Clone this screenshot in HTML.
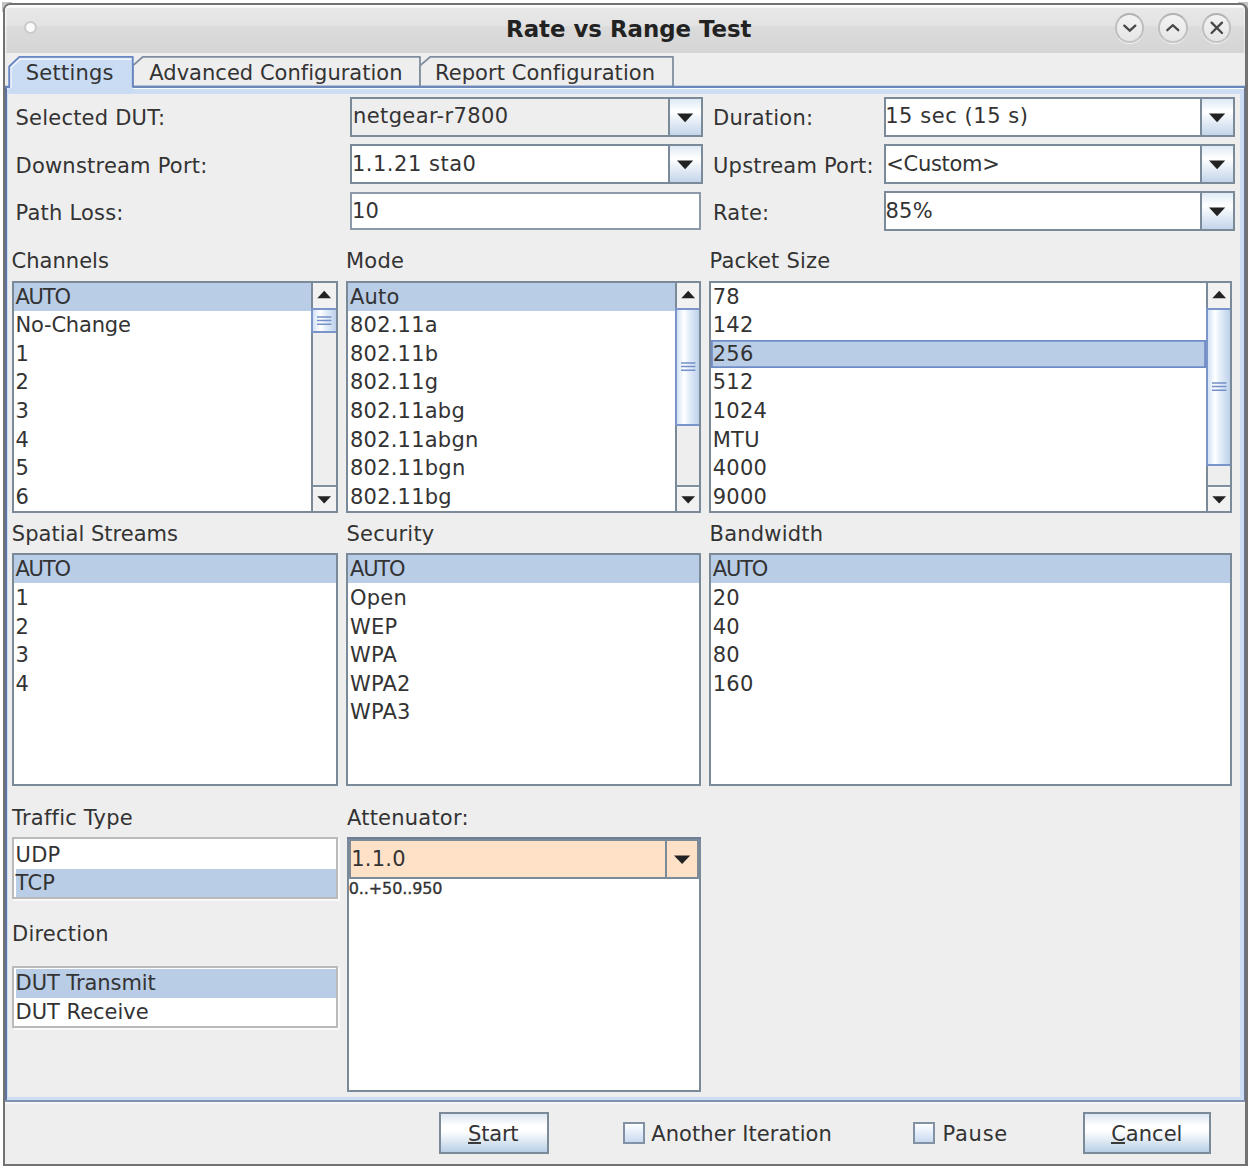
<!DOCTYPE html><html><head><meta charset="utf-8"><title>Rate vs Range Test</title><style>
html,body{margin:0;padding:0;}
body{width:1250px;height:1166px;overflow:hidden;background:#fff;position:relative;font-family:"DejaVu Sans","Liberation Sans",sans-serif;font-size:21px;letter-spacing:0.22px;color:#333;}
.abs{position:absolute;}
.win{position:absolute;left:3px;top:3px;width:1245px;height:1163px;box-sizing:border-box;border:2px solid #727272;border-right-width:3.5px;border-radius:7.5px 7.5px 0 0;background:#eeeeee;overflow:hidden;}
.corner{position:absolute;width:10px;height:10px;background:#c4c4c4;}
.title{position:absolute;left:0;top:0;width:1239.5px;height:47.5px;box-shadow:inset 1.6px 0 0 rgba(255,255,255,0.55), inset -1.2px 0 0 rgba(255,255,255,0.4);background:linear-gradient(#ffffff 0px,#fafafa 2.2px,#e8e8e8 3.5px,#e3e3e3 20.5px,#dbdbdb 22px,#d5d5d5 47.5px);}
.title .t{position:absolute;left:501.1px;top:8.5px;white-space:pre;font-weight:bold;font-size:22.85px;letter-spacing:0;line-height:30px;color:#222;}
.wb{position:absolute;width:29.6px;height:29.6px;border-radius:50%;border:2px solid #bfbfbf;border-top-color:#b2b2b2;border-bottom-color:#c6c6c6;box-sizing:border-box;background:linear-gradient(#f3f3f3,#e6e6e6);box-shadow:0 1px 0.5px rgba(255,255,255,0.7);}
.lbl{position:absolute;white-space:pre;line-height:28px;height:28px;}
.combo{position:absolute;box-sizing:border-box;border:2px solid #7a8a99;background:#fff;}
.combo .tx{position:absolute;left:0px;top:0;white-space:pre;line-height:28px;}
.combo .btn{position:absolute;right:0;top:0;bottom:0;width:30.2px;border-left:2px solid #7a8a99;background:linear-gradient(#dfeaf5 0%,#ffffff 35%,#c3d5ea 100%);}
.combo .btn svg{position:absolute;left:0;top:0;}
.list{position:absolute;box-sizing:border-box;border:2px solid #7a8a99;background:#fff;overflow:hidden;}
.row{position:absolute;left:0;right:0;white-space:pre;}
.row span{position:absolute;left:0;top:0;}
.row.sel{background:#bacde6;}
.sb{position:absolute;top:0;bottom:0;right:0;width:22.7px;border-left:2px solid #7a8a99;background:#eeeeee;}
.sbb{position:absolute;left:0;right:0;background:#f1f1f1;box-sizing:border-box;}
.thumb{position:absolute;left:-2px;right:0;box-sizing:border-box;border:2px solid #7b95cb;border-right:none;background:linear-gradient(90deg,#d3e2f5 0%,#ffffff 32%,#e4eefa 55%,#bdd1ea 100%);}
.btnb{position:absolute;box-sizing:border-box;border:2px solid #7a8a99;background:linear-gradient(#dbe6f2 0%,#ffffff 30%,#ffffff 45%,#b8cfe5 100%);}
.chk{position:absolute;box-sizing:border-box;width:21.6px;height:21.6px;border:2px solid #8391a4;background:linear-gradient(#fdfeff 0%,#e9f0fb 40%,#c9d9ef 100%);}
u{text-decoration:underline;text-underline-offset:1.6px;text-decoration-thickness:1.9px;}
</style></head><body>
<div class="corner" style="left:2.3px;top:2.3px"></div><div class="corner" style="left:1238px;top:2.3px"></div>
<div class="win">
<div class="title"><div class="t">Rate vs Range Test</div>
<div class="abs" style="left:19px;top:15.5px;width:13.4px;height:13.4px;border-radius:50%;background:#fbfbfb;border:2px solid #cbcbcb;box-sizing:border-box"></div>
<div class="wb" style="left:1109.8px;top:8.1px"><svg width="29.6" height="29.6" viewBox="0 0 29.6 29.6" style="position:absolute;left:-2px;top:-2px"><path d="M9.3 12.6 L14.8 17.6 L20.3 12.6" fill="none" stroke="#484848" stroke-width="2.3" stroke-linecap="round"/></svg></div>
<div class="wb" style="left:1153.2px;top:8.1px"><svg width="29.6" height="29.6" viewBox="0 0 29.6 29.6" style="position:absolute;left:-2px;top:-2px"><path d="M9.3 17.2 L14.8 12.2 L20.3 17.2" fill="none" stroke="#484848" stroke-width="2.3" stroke-linecap="round"/></svg></div>
<div class="wb" style="left:1196.7px;top:8.1px"><svg width="29.6" height="29.6" viewBox="0 0 29.6 29.6" style="position:absolute;left:-2px;top:-2px"><path d="M9.6 9.6 L20 20 M20 9.6 L9.6 20" fill="none" stroke="#484848" stroke-width="2.3" stroke-linecap="round"/></svg></div>
</div>
<div class="abs" style="left:0px;top:80.8px;width:1241px;height:1016.2px;background:#cddef4"></div>
<div class="abs" style="left:0px;top:80.8px;width:1241px;height:1.8px;background:#6a86be"></div>
<div class="abs" style="left:1.8px;top:82.6px;width:1237.4px;height:1.9px;background:#f5faff"></div>
<div class="abs" style="left:0px;top:80.8px;width:1.8px;height:1016.2px;background:#5f73a0"></div>
<div class="abs" style="left:1239.2px;top:80.8px;width:1.8px;height:1016.2px;background:#68789c"></div>
<div class="abs" style="left:0px;top:1095.2px;width:1241px;height:1.8px;background:#8391b0"></div>
<div class="abs" style="left:3.4px;top:88.5px;width:1231.8px;height:1003.1px;background:#eeeeee"></div>
<div class="abs" style="left:0px;top:1097px;width:1241px;height:1.5px;background:#f6f6f6"></div>
<svg class="abs" style="left:0;top:45px" width="1241" height="45" viewBox="5 50 1241 45">
<polygon points="132.8,86.7 132.8,65.6 143,56.8 420,56.8 420,86.7" fill="#eeeeee" stroke="#7f8e9e" stroke-width="1.8" stroke-linejoin="round"/>
<polygon points="420,86.7 420,65.6 430.4,56.8 673,56.8 673,86.7" fill="#eeeeee" stroke="#7f8e9e" stroke-width="1.8" stroke-linejoin="round"/>
<polygon points="8.5,93.5 8.5,66.5 19,56.8 132.8,56.8 132.8,88.3 132.8,93.5" fill="#c9dcf3"/>
<polyline points="11,88 11,67.4 20,59.2 131.4,59.2" fill="none" stroke="#ffffff" stroke-width="1.4" opacity="0.75"/>
<polyline points="9.2,88 9.2,66.5 19.3,56.9 132.8,56.9 132.8,86.7" fill="none" stroke="#6a86c2" stroke-width="1.8" stroke-linejoin="round"/>
<line x1="131.9" y1="86.7" x2="1246" y2="86.7" stroke="#6a86be" stroke-width="1.8"/>
<line x1="5" y1="86.7" x2="9.2" y2="86.7" stroke="#6a86be" stroke-width="1.8"/>
</svg>
<div class="lbl" style="left:20.8px;top:54.2px;">Settings</div>
<div class="lbl" style="left:144.3px;top:54.2px;letter-spacing:0.02px;">Advanced Configuration</div>
<div class="lbl" style="left:430px;top:54.2px;letter-spacing:0.07px;">Report Configuration</div>
<div class="lbl" style="left:10.5px;top:99.2px;">Selected DUT:</div>
<div class="lbl" style="left:708px;top:99.2px;">Duration:</div>
<div class="combo" style="left:345px;top:91.8px;width:352.6px;height:40.3px;background:#eeeeee;border:2px solid #7a8a99">
<div class="tx" style="left:1px;top:3.4px;letter-spacing:0.39px">netgear-r7800</div>
<div class="btn"><svg width="31" height="36" viewBox="0 0 31 36"><polygon points="7,14.55 23.2,14.55 15.1,23.15" fill="#222"/></svg></div>
</div>
<div class="combo" style="left:878.6px;top:91.8px;width:351px;height:40.3px;background:#fff;border:2px solid #7a8a99">
<div class="tx" style="left:-0.4px;top:3.4px;letter-spacing:0.55px">15 sec (15 s)</div>
<div class="btn"><svg width="31" height="36" viewBox="0 0 31 36"><polygon points="7,14.55 23.2,14.55 15.1,23.15" fill="#222"/></svg></div>
</div>
<div class="lbl" style="left:10.5px;top:147.2px;">Downstream Port:</div>
<div class="lbl" style="left:708px;top:147.2px;">Upstream Port:</div>
<div class="combo" style="left:345px;top:139px;width:352.6px;height:40.3px;background:#fff;border:2px solid #7a8a99">
<div class="tx" style="left:-0.1px;top:4.2px;letter-spacing:0.52px">1.1.21 sta0</div>
<div class="btn"><svg width="31" height="36" viewBox="0 0 31 36"><polygon points="7,14.55 23.2,14.55 15.1,23.15" fill="#222"/></svg></div>
</div>
<div class="combo" style="left:878.6px;top:139px;width:351px;height:40.3px;background:#fff;border:2px solid #7a8a99">
<div class="tx" style="left:0.6px;top:4.2px;letter-spacing:-0.28px">&lt;Custom&gt;</div>
<div class="btn"><svg width="31" height="36" viewBox="0 0 31 36"><polygon points="7,14.55 23.2,14.55 15.1,23.15" fill="#222"/></svg></div>
</div>
<div class="lbl" style="left:10.5px;top:194.2px;">Path Loss:</div>
<div class="lbl" style="left:708px;top:194.2px;">Rate:</div>
<div class="combo" style="left:345px;top:186.5px;width:350.9px;height:38.6px;background:#fff;border:2px solid #8c99ab">
<div class="tx" style="left:-0.1px;top:3.7px;letter-spacing:0.22px">10</div>
</div>
<div class="combo" style="left:878.6px;top:186.2px;width:351px;height:40.3px;background:#fff;border:2px solid #7a8a99">
<div class="tx" style="left:-0.1px;top:4px;letter-spacing:0.22px">85%</div>
<div class="btn"><svg width="31" height="36" viewBox="0 0 31 36"><polygon points="7,14.55 23.2,14.55 15.1,23.15" fill="#222"/></svg></div>
</div>
<div class="lbl" style="left:6.6px;top:242.2px;letter-spacing:0.02px;">Channels</div>
<div class="lbl" style="left:341px;top:242.2px;">Mode</div>
<div class="lbl" style="left:704.5px;top:242.2px;">Packet Size</div>
<div class="list" style="left:6.8px;top:275.7px;width:326.2px;height:232.3px;border-color:#7a8a99">
<div class="row sel" style="top:0px;height:28.3px;line-height:28px;right:24.7px;left:0px;"><span style="letter-spacing:-1.18px;left:1.6px;top:0.5px">AUTO</span></div>
<div class="row" style="top:28.3px;height:28.57px;line-height:28px;right:24.7px;left:0px;"><span style="letter-spacing:-0.18px;left:1.6px;top:0.2px">No-Change</span></div>
<div class="row" style="top:56.87px;height:28.57px;line-height:28px;right:24.7px;left:0px;"><span style="left:1.6px;top:0.63px">1</span></div>
<div class="row" style="top:85.44px;height:28.57px;line-height:28px;right:24.7px;left:0px;"><span style="left:1.6px;top:0.06px">2</span></div>
<div class="row" style="top:114.01px;height:28.57px;line-height:28px;right:24.7px;left:0px;"><span style="left:1.6px;top:0.49px">3</span></div>
<div class="row" style="top:142.58px;height:28.57px;line-height:28px;right:24.7px;left:0px;"><span style="left:1.6px;top:0.92px">4</span></div>
<div class="row" style="top:171.15px;height:28.57px;line-height:28px;right:24.7px;left:0px;"><span style="left:1.6px;top:0.35px">5</span></div>
<div class="row" style="top:199.72px;height:28.57px;line-height:28px;right:24.7px;left:0px;"><span style="left:1.6px;top:0.78px">6</span></div>
<div class="sb">
<div class="sbb" style="top:0;height:25px"><svg width="23" height="25" style="position:absolute;left:0;top:0"><polygon points="4.3,15.2 11.2,7.8 18.1,15.2" fill="#222"/></svg></div>
<div class="sbb" style="top:202.3px;height:26px;border-top:2px solid #808f9e;box-shadow:inset 0 1.5px 0 #fafafa"><svg width="23" height="25" style="position:absolute;left:0;top:-2px"><polygon points="4.3,11.2 18.1,11.2 11.2,18.6" fill="#222"/></svg></div>
<div class="thumb" style="top:25px;height:25.8px"></div>
<svg class="abs" style="left:4.2px;top:32.3px" width="15" height="12"><path d="M0 2H14.4M0 5.6H14.4M0 9.2H14.4" stroke="#7590c8" stroke-width="1.5"/></svg>
</div>
</div>
<div class="list" style="left:341.4px;top:275.7px;width:355.1px;height:232.3px;border-color:#7a8a99">
<div class="row sel" style="top:0px;height:28.3px;line-height:28px;right:24.7px;left:0px;"><span style="left:1.6px;top:0.5px">Auto</span></div>
<div class="row" style="top:28.3px;height:28.57px;line-height:28px;right:24.7px;left:0px;"><span style="left:1.6px;top:0.2px">802.11a</span></div>
<div class="row" style="top:56.87px;height:28.57px;line-height:28px;right:24.7px;left:0px;"><span style="left:1.6px;top:0.63px">802.11b</span></div>
<div class="row" style="top:85.44px;height:28.57px;line-height:28px;right:24.7px;left:0px;"><span style="left:1.6px;top:0.06px">802.11g</span></div>
<div class="row" style="top:114.01px;height:28.57px;line-height:28px;right:24.7px;left:0px;"><span style="left:1.6px;top:0.49px">802.11abg</span></div>
<div class="row" style="top:142.58px;height:28.57px;line-height:28px;right:24.7px;left:0px;"><span style="left:1.6px;top:0.92px">802.11abgn</span></div>
<div class="row" style="top:171.15px;height:28.57px;line-height:28px;right:24.7px;left:0px;"><span style="left:1.6px;top:0.35px">802.11bgn</span></div>
<div class="row" style="top:199.72px;height:28.57px;line-height:28px;right:24.7px;left:0px;"><span style="left:1.6px;top:0.78px">802.11bg</span></div>
<div class="sb">
<div class="sbb" style="top:0;height:25px"><svg width="23" height="25" style="position:absolute;left:0;top:0"><polygon points="4.3,15.2 11.2,7.8 18.1,15.2" fill="#222"/></svg></div>
<div class="sbb" style="top:202.3px;height:26px;border-top:2px solid #808f9e;box-shadow:inset 0 1.5px 0 #fafafa"><svg width="23" height="25" style="position:absolute;left:0;top:-2px"><polygon points="4.3,11.2 18.1,11.2 11.2,18.6" fill="#222"/></svg></div>
<div class="thumb" style="top:25px;height:118.3px"></div>
<svg class="abs" style="left:4.2px;top:78.55px" width="15" height="12"><path d="M0 2H14.4M0 5.6H14.4M0 9.2H14.4" stroke="#7590c8" stroke-width="1.5"/></svg>
</div>
</div>
<div class="list" style="left:704.2px;top:275.7px;width:523.2px;height:232.3px;border-color:#7a8a99">
<div class="row" style="top:0px;height:28.3px;line-height:28px;right:24.7px;left:0px;"><span style="left:1.6px;top:0.5px">78</span></div>
<div class="row" style="top:28.3px;height:28.57px;line-height:28px;right:24.7px;left:0px;"><span style="left:1.6px;top:0.2px">142</span></div>
<div class="row sel" style="top:56.87px;height:28.57px;line-height:28px;right:24.7px;left:0px;box-shadow:inset 0 0 0 1.8px #6f8cc6;"><span style="left:1.6px;top:0.63px">256</span></div>
<div class="row" style="top:85.44px;height:28.57px;line-height:28px;right:24.7px;left:0px;"><span style="left:1.6px;top:0.06px">512</span></div>
<div class="row" style="top:114.01px;height:28.57px;line-height:28px;right:24.7px;left:0px;"><span style="left:1.6px;top:0.49px">1024</span></div>
<div class="row" style="top:142.58px;height:28.57px;line-height:28px;right:24.7px;left:0px;"><span style="left:1.6px;top:0.92px">MTU</span></div>
<div class="row" style="top:171.15px;height:28.57px;line-height:28px;right:24.7px;left:0px;"><span style="left:1.6px;top:0.35px">4000</span></div>
<div class="row" style="top:199.72px;height:28.57px;line-height:28px;right:24.7px;left:0px;"><span style="left:1.6px;top:0.78px">9000</span></div>
<div class="sb">
<div class="sbb" style="top:0;height:25px"><svg width="23" height="25" style="position:absolute;left:0;top:0"><polygon points="4.3,15.2 11.2,7.8 18.1,15.2" fill="#222"/></svg></div>
<div class="sbb" style="top:202.3px;height:26px;border-top:2px solid #808f9e;box-shadow:inset 0 1.5px 0 #fafafa"><svg width="23" height="25" style="position:absolute;left:0;top:-2px"><polygon points="4.3,11.2 18.1,11.2 11.2,18.6" fill="#222"/></svg></div>
<div class="thumb" style="top:25.3px;height:158px"></div>
<svg class="abs" style="left:4.2px;top:98.7px" width="15" height="12"><path d="M0 2H14.4M0 5.6H14.4M0 9.2H14.4" stroke="#7590c8" stroke-width="1.5"/></svg>
</div>
</div>
<div class="lbl" style="left:6.8px;top:515.2px;letter-spacing:0.02px;">Spatial Streams</div>
<div class="lbl" style="left:341.5px;top:515.2px;">Security</div>
<div class="lbl" style="left:704.5px;top:515.2px;">Bandwidth</div>
<div class="list" style="left:6.8px;top:547.9px;width:326.2px;height:233.3px;border-color:#7a8a99">
<div class="row sel" style="top:0px;height:28.3px;line-height:28px;right:0px;left:0px;"><span style="letter-spacing:-1.18px;left:1.6px;top:0.3px">AUTO</span></div>
<div class="row" style="top:28.3px;height:28.57px;line-height:28px;right:0px;left:0px;"><span style="left:1.6px;top:1px">1</span></div>
<div class="row" style="top:56.87px;height:28.57px;line-height:28px;right:0px;left:0px;"><span style="left:1.6px;top:1.43px">2</span></div>
<div class="row" style="top:85.44px;height:28.57px;line-height:28px;right:0px;left:0px;"><span style="left:1.6px;top:0.86px">3</span></div>
<div class="row" style="top:114.01px;height:28.57px;line-height:28px;right:0px;left:0px;"><span style="left:1.6px;top:1.29px">4</span></div>
</div>
<div class="list" style="left:341.4px;top:547.9px;width:355.1px;height:233.3px;border-color:#7a8a99">
<div class="row sel" style="top:0px;height:28.3px;line-height:28px;right:0px;left:0px;"><span style="letter-spacing:-1.18px;left:1.6px;top:0.3px">AUTO</span></div>
<div class="row" style="top:28.3px;height:28.57px;line-height:28px;right:0px;left:0px;"><span style="left:1.6px;top:1px">Open</span></div>
<div class="row" style="top:56.87px;height:28.57px;line-height:28px;right:0px;left:0px;"><span style="left:1.6px;top:1.43px">WEP</span></div>
<div class="row" style="top:85.44px;height:28.57px;line-height:28px;right:0px;left:0px;"><span style="left:1.6px;top:0.86px">WPA</span></div>
<div class="row" style="top:114.01px;height:28.57px;line-height:28px;right:0px;left:0px;"><span style="left:1.6px;top:1.29px">WPA2</span></div>
<div class="row" style="top:142.58px;height:28.57px;line-height:28px;right:0px;left:0px;"><span style="left:1.6px;top:0.72px">WPA3</span></div>
</div>
<div class="list" style="left:704.2px;top:547.9px;width:523.2px;height:233.3px;border-color:#7a8a99">
<div class="row sel" style="top:0px;height:28.3px;line-height:28px;right:0px;left:0px;"><span style="letter-spacing:-1.18px;left:1.6px;top:0.3px">AUTO</span></div>
<div class="row" style="top:28.3px;height:28.57px;line-height:28px;right:0px;left:0px;"><span style="left:1.6px;top:1px">20</span></div>
<div class="row" style="top:56.87px;height:28.57px;line-height:28px;right:0px;left:0px;"><span style="left:1.6px;top:1.43px">40</span></div>
<div class="row" style="top:85.44px;height:28.57px;line-height:28px;right:0px;left:0px;"><span style="left:1.6px;top:0.86px">80</span></div>
<div class="row" style="top:114.01px;height:28.57px;line-height:28px;right:0px;left:0px;"><span style="left:1.6px;top:1.29px">160</span></div>
</div>
<div class="lbl" style="left:7px;top:799.2px;">Traffic Type</div>
<div class="lbl" style="left:342px;top:799.2px;">Attenuator:</div>
<div class="list" style="left:7px;top:832.2px;width:326px;height:62.1px;border:2px solid #bababa;box-shadow:1.8px 1.8px 0 #fbfbfb">
<div class="row" style="top:1.8px;height:28.15px;line-height:28px;right:0;left:1.8px;"><span style="left:-0.2px;top:0.2px">UDP</span></div>
<div class="row sel" style="top:29.95px;height:28.15px;line-height:28px;right:0;left:1.8px;"><span style="left:-0.2px;top:0.05px">TCP</span></div>
</div>
<div class="lbl" style="left:7px;top:915.2px;">Direction</div>
<div class="list" style="left:7px;top:960.6px;width:326px;height:62.1px;border:2px solid #bababa;box-shadow:1.8px 1.8px 0 #fbfbfb">
<div class="row sel" style="top:1.8px;height:28.15px;line-height:28px;right:0;left:1.8px;"><span style="letter-spacing:-0.08px;left:-0.2px;top:-0.2px">DUT Transmit</span></div>
<div class="row" style="top:29.95px;height:28.15px;line-height:28px;right:0;left:1.8px;"><span style="letter-spacing:-0.03px;left:-0.2px;top:0.65px">DUT Receive</span></div>
</div>
<div class="list" style="left:341.8px;top:832.4px;width:354px;height:254.2px"></div>
<div class="abs" style="left:341.8px;top:832.4px;width:354px;height:2px;background:#6f7f96"></div>
<div class="combo" style="left:343.6px;top:834.2px;width:350.4px;height:40px;background:#ffe1c8;border:2px solid #7a8a99">
<div class="tx" style="left:0.6px;top:4px;letter-spacing:0.22px">1.1.0</div>
<div class="btn" style="background:#ffe1c8"><svg width="31" height="36" viewBox="0 0 31 36"><polygon points="7,14.4 23.2,14.4 15.1,23" fill="#222"/></svg></div>
</div>
<div class="lbl" style="left:343.8px;top:870.2px;font-size:16px;letter-spacing:-0.12px;-webkit-text-stroke:0.35px #333;">0..+50..950</div>
<div class="btnb" style="left:434.4px;top:1107.4px;width:109.7px;height:41.8px"><div class="lbl" style="left:26.6px;top:5.8px;letter-spacing:-0.18px">Start</div><div class="abs" style="left:26.8px;top:28.1px;width:13.2px;height:2px;background:#3a3a3a"></div></div>
<div class="btnb" style="left:1077.8px;top:1107.4px;width:128px;height:41.8px"><div class="lbl" style="left:26.4px;top:5.8px;letter-spacing:0.02px">Cancel</div><div class="abs" style="left:26.2px;top:28.1px;width:13.6px;height:2px;background:#3a3a3a"></div></div>
<div class="chk" style="left:618px;top:1117.3px"></div>
<div class="lbl" style="left:646.3px;top:1115.2px;letter-spacing:0.07px;">Another Iteration</div>
<div class="chk" style="left:908.3px;top:1117.3px"></div>
<div class="lbl" style="left:937.6px;top:1115.2px;letter-spacing:0.72px;">Pause</div>
</div></body></html>
